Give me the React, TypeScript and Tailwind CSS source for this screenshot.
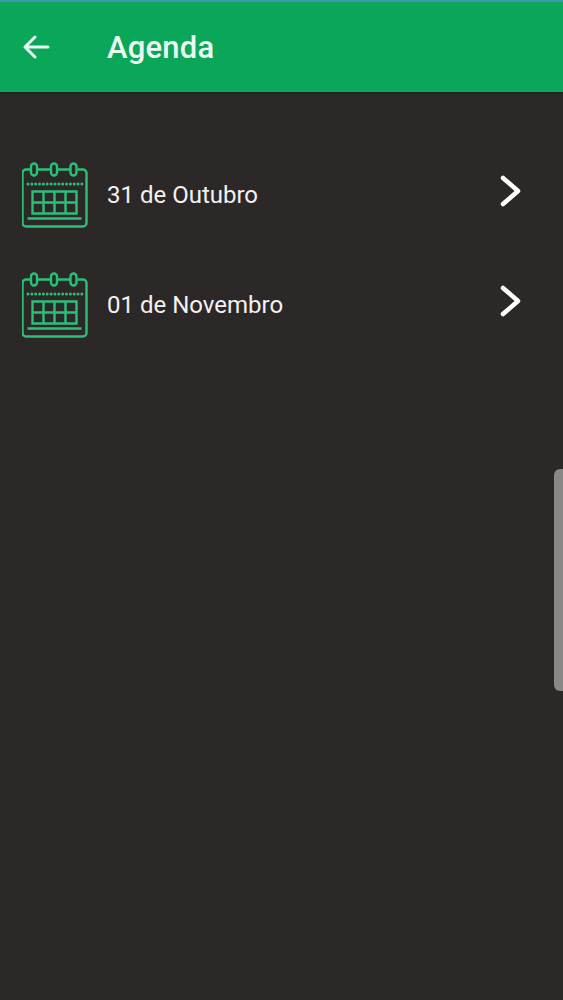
const days = ['31 de Outubro', '01 de Novembro'];

function CalendarIcon() {
  const dots = [];
  for (let i = 0; i < 15; i++) dots.push(6 + i * 3.85);
  return (
    <svg width="66" height="66" viewBox="0 0 66 66" fill="none" stroke="#2bc078" strokeWidth="2.4" className="shrink-0">
      <path d="M8.5 7.5H4a3.5 3.5 0 0 0-3.5 3.500v50a3.500 3.500 0 0 0 3.500 3.500h57a3.500 3.500 0 0 0 3.500-3.500V11A3.500 3.500 0 0 0 61 7.500h-5.500M15.500 7.500h13.500M35.500 7.500H48" />
      <rect x="9" y="1.500" width="6" height="12" rx="3" />
      <rect x="29" y="1.500" width="6" height="12" rx="3" />
      <rect x="48.500" y="1.500" width="6" height="12" rx="3" />
      {dots.map((x) => (
        <circle key={x} cx={x} cy="22" r="1.5" fill="#2bc078" stroke="none" />
      ))}
      <path d="M10.500 29.500h44v22h-44zM10.500 40.500h44M21.500 29.500v22M32.500 29.500v22M43.500 29.500v22" />
      <path d="M5.500 56.500h54" strokeWidth="2.4" />
    </svg>
  );
}

export default function App() {
  return (
    <div className="relative h-[1000px] w-full overflow-hidden bg-[#2c2828]" style={{ fontFamily: 'Roboto, sans-serif' }}>
      <header className="flex h-[94px] items-center border-t-2 border-b-2 border-t-[#3a9bb0] border-b-[#1f241f] bg-[#0aa65a] pl-[22px] text-white">
        <svg width="28" height="28" viewBox="0 0 28 28" fill="none" stroke="#eafaf1" strokeWidth="3" strokeLinecap="round" strokeLinejoin="round" className="shrink-0">
          <path d="M3 14h23M13 4 3 14l10 10" />
        </svg>
        <h1 className="ml-[57px] pt-[2px] text-[31px] font-medium tracking-[0.2px] text-[#eafaf1]">Agenda</h1>
      </header>
      <ul className="flex flex-col gap-[44px] pt-[68px] pl-[22px] pr-[40px]">
        {days.map((day) => (
          <li key={day} className="flex h-[66px] items-center text-white">
            <CalendarIcon />
            <span className="ml-[19px] flex-1 text-[24px] text-[#f2f2f2]">{day}</span>
            <svg width="24" height="32" viewBox="0 0 24 32" fill="none" stroke="white" strokeWidth="4.500" strokeLinecap="round" strokeLinejoin="round" className="mb-[8px] shrink-0">
              <path d="M4 3l15 13L4 29" />
            </svg>
          </li>
        ))}
      </ul>
      <div className="absolute top-[469px] right-0 h-[222px] w-[9px] rounded-l-[6px] bg-[#8a8786]" />
    </div>
  );
}
